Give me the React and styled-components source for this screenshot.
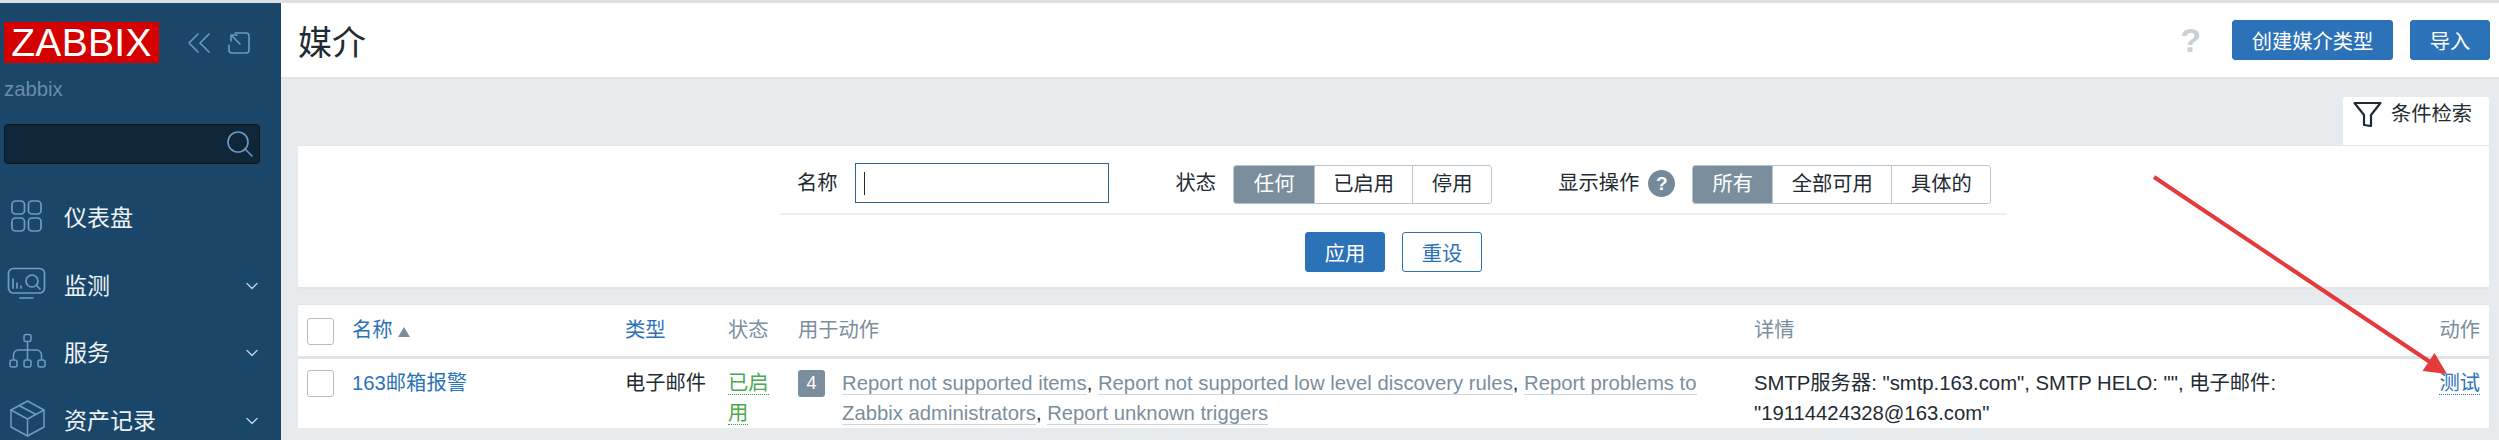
import React from "react";
import styled, { createGlobalStyle } from "styled-components";

const FONT = `"Liberation Sans", "Noto Sans CJK SC", Arial, sans-serif`;

const Global = createGlobalStyle`
  html, body { margin: 0; padding: 0; background: #e8ebee; }
  body { font-family: ${FONT}; font-size: 20.3px; color: #1f2c33; overflow: hidden; }
`;

const Page = styled.div`
  position: relative;
  width: 2499px;
  height: 440px;
  overflow: hidden;
  border-top: 3px solid #dcdfe3;
  box-sizing: border-box;
  display: flex;
`;

const Sidebar = styled.aside`
  width: 281px;
  flex: none;
  background: #1a4669;
  padding: 19px 21px 0 4px;
  box-sizing: border-box;
`;

const BrandRow = styled.div`
  display: flex;
  align-items: center;
  height: 41px;
`;

const Logo = styled.div`
  width: 155px;
  height: 41px;
  background: #d40000;
  color: #fff;
  font-size: 39px;
  line-height: 41px;
  text-align: center;
  letter-spacing: 0.3px;
`;

const BrandIcons = styled.div`
  display: flex;
  gap: 17px;
  margin-left: 28px;
  color: #6a9bc4;
`;

const Tenant = styled.div`
  margin-top: 13px;
  height: 26px;
  line-height: 26px;
  font-size: 20.3px;
  color: #698cab;
`;

const SearchBox = styled.div`
  margin-top: 22px;
  height: 40px;
  box-sizing: border-box;
  background: #0f2538;
  border: 1px solid #0a1824;
  border-radius: 4px;
  display: flex;
  align-items: center;
  justify-content: flex-end;
  padding-right: 6px;
  color: #6a9bc4;
`;

const Menu = styled.nav`
  margin-top: 18px;
  margin-left: -4px;
  margin-right: -10px;
`;

const MenuItem = styled.div`
  height: 67.7px;
  display: flex;
  align-items: center;
  color: #eef2f5;
  font-size: 23px;
`;

const MenuIcon = styled.span`
  width: 64px;
  flex: none;
  display: flex;
  color: #6f9cc2;
`;

const MenuLabel = styled.span`
  flex: 1;
`;

const Chevron = styled.span`
  display: flex;
  color: #c3d4e2;
  margin-top: 4px;
  margin-right: 12px;
`;

const Main = styled.main`
  flex: 1;
  min-width: 0;
`;

const Header = styled.header`
  height: 76px;
  box-sizing: border-box;
  background: #fff;
  border-bottom: 2px solid #dfe4e7;
  display: flex;
  align-items: center;
  padding: 0 9px 0 17px;
  gap: 17px;
`;

const Title = styled.h1`
  flex: 1;
  margin: 0;
  font-size: 34px;
  font-weight: 400;
  color: #1f2c33;
`;

const HelpMark = styled.span`
  font-size: 34px;
  font-weight: 700;
  color: #c8d1d8;
  margin-right: 14px;
`;

const Button = styled.button`
  height: 40px;
  min-width: ${(p) => p.$w || 80}px;
  box-sizing: border-box;
  padding: 0;
  font-family: ${FONT};
  font-size: 20.3px;
  color: ${(p) => (p.$ghost ? "#2b72b8" : "#fff")};
  background: ${(p) => (p.$ghost ? "#fff" : "#2b72b8")};
  border: 1px solid #2b72b8;
  border-radius: 3px;
`;

const Content = styled.div`
  padding: 18px 10px 0 17px;
`;

const TabRow = styled.div`
  display: flex;
  justify-content: flex-end;
`;

const FilterTab = styled.div`
  width: 146px;
  height: 48px;
  box-sizing: border-box;
  background: #fff;
  border-radius: 3px 3px 0 0;
  display: flex;
  align-items: flex-start;
  padding: 4px 0 0 10px;
  gap: 9px;
  line-height: 26px;
  color: #1f2c33;
`;

const FilterPanel = styled.section`
  background: #fff;
  height: 144px;
  box-sizing: border-box;
  border-top: 1px solid #e2e6e9;
  border-bottom: 2px solid #e2e6e9;
  padding-top: 17px;
  display: flex;
  flex-direction: column;
  align-items: center;
`;

const FilterFields = styled.div`
  width: 1227px;
  height: 52px;
  box-sizing: border-box;
  border-bottom: 2px solid #eceef0;
  display: flex;
  align-items: flex-start;
  padding-left: 17px;
`;

const FieldLabel = styled.label`
  line-height: 40px;
  margin-right: ${(p) => p.$gap}px;
  margin-left: ${(p) => p.$left || 0}px;
`;

const TextBox = styled.div`
  width: 254px;
  height: 40px;
  flex: none;
  box-sizing: border-box;
  border: 1px solid #2b6496;
  display: flex;
  align-items: center;
  padding-left: 8px;
`;

const Caret = styled.span`
  width: 1.5px;
  height: 23px;
  background: #1f2c33;
`;

const Segments = styled.div`
  display: flex;
  flex: none;
  height: 39px;
  margin-top: 2px;
  box-sizing: border-box;
  border: 1px solid #b9c4cc;
  border-radius: 3px;
  overflow: hidden;
`;

const Segment = styled.span`
  width: ${(p) => p.$w}px;
  box-sizing: border-box;
  text-align: center;
  line-height: 37px;
  background: ${(p) => (p.$on ? "#7b8e9e" : "#fff")};
  color: ${(p) => (p.$on ? "#fff" : "#1f2c33")};
  border-left: ${(p) => (p.$first ? "none" : "1px solid #b9c4cc")};
`;

const HelpDot = styled.span`
  flex: none;
  width: 27px;
  height: 27px;
  border-radius: 50%;
  background: #76899a;
  color: #fff;
  font-size: 19px;
  font-weight: 700;
  text-align: center;
  line-height: 27px;
  margin: 7px 17px 0 9px;
`;

const FilterActions = styled.div`
  display: flex;
  gap: 17px;
  margin-top: 17px;
`;

const TableCard = styled.section`
  margin-top: 15px;
  background: #fff;
  border-top: 1px solid #e2e6e9;
`;

const Table = styled.table`
  width: 100%;
  table-layout: fixed;
  border-collapse: collapse;
  line-height: 30px;

  th {
    height: 52px;
    box-sizing: border-box;
    padding: 0 10px 0 0;
    border-bottom: 3px solid #dee4e8;
    text-align: left;
    font-weight: 400;
    color: #7b8e9e;
  }

  td {
    padding: 9px 10px 0 0;
    vertical-align: top;
  }

  th:last-child, td:last-child {
    text-align: right;
    padding-right: 9px;
  }
`;

const Check = styled.span`
  display: block;
  width: 27px;
  height: 27px;
  box-sizing: border-box;
  margin: ${(p) => (p.$head ? 3 : 2)}px 0 0 9px;
  border: 1px solid #b1bec8;
  border-radius: 3px;
  background: #fff;
`;

const HeadLink = styled.span`
  color: #2b72b8;
`;

const SortUp = styled.span`
  display: inline-block;
  margin-left: 5px;
  border-left: 6px solid transparent;
  border-right: 6px solid transparent;
  border-bottom: 10px solid #7b8e9e;
`;

const Enabled = styled.span`
  color: #4aa84f;
  border-bottom: 1px dotted #3f9a44;
`;

const ActionCell = styled.div`
  display: flex;
  align-items: flex-start;
  gap: 17px;
`;

const Badge = styled.span`
  flex: none;
  width: 27px;
  height: 27px;
  margin-top: 2px;
  border-radius: 3px;
  background: #7b8e9e;
  color: #fff;
  font-size: 18px;
  line-height: 27px;
  text-align: center;
`;

const GreyLink = styled.span`
  color: #7b8e9e;
  border-bottom: 1px solid #cfd6db;
`;

const TestLink = styled.span`
  color: #2b72b8;
  border-bottom: 1px dotted #2b72b8;
`;

const ArrowLayer = styled.svg`
  position: absolute;
  left: 0;
  top: -3px;
  pointer-events: none;
`;

const Icon = ({ w, h, vb, sw = 1.6, children }) => (
  <svg width={w} height={h} viewBox={vb} fill="none" stroke="currentColor" strokeWidth={sw} strokeLinecap="round" strokeLinejoin="round">
    {children}
  </svg>
);

// menu icons share one 50x40 box so they line up with the labels
const menu = [
  {
    label: "仪表盘",
    icon: (
      <Icon w={50} h={40} vb="0 0 50 40" sw={1.7}>
        <rect x="12" y="5" width="12.5" height="13" rx="3.5" />
        <rect x="28.5" y="5" width="12.5" height="13" rx="3.5" />
        <rect x="12" y="22" width="12.5" height="13" rx="3.5" />
        <rect x="28.5" y="22" width="12.5" height="13" rx="3.5" />
      </Icon>
    ),
  },
  {
    label: "监测",
    arrow: true,
    icon: (
      <Icon w={50} h={40} vb="0 0 50 40" sw={1.7}>
        <rect x="8.5" y="4.5" width="36" height="24.5" rx="5" />
        <path d="M20 34h13M13 24v-9M17 24v-5M21 24v-2" />
        <circle cx="32" cy="17" r="6" />
        <path d="M36.5 21.5l3.5 3.5" />
      </Icon>
    ),
  },
  {
    label: "服务",
    arrow: true,
    icon: (
      <Icon w={50} h={40} vb="0 0 50 40" sw={1.5}>
        <rect x="24" y="3.5" width="7" height="7" rx="2" />
        <path d="M27.5 10.5v8M13.5 28v-4a5 5 0 0 1 5-5h18a5 5 0 0 1 5 5v4M27.5 18.5V28" />
        <rect x="10" y="29" width="7" height="7" rx="2" />
        <rect x="24" y="29" width="7" height="7" rx="2" />
        <rect x="38" y="29" width="7" height="7" rx="2" />
      </Icon>
    ),
  },
  {
    label: "资产记录",
    arrow: true,
    icon: (
      <Icon w={50} h={40} vb="0 0 50 40" sw={1.5}>
        <path d="M27.5 2L44 11v17l-16.5 9L11 28V11z" />
        <path d="M11 11l16.5 9L44 11M27.5 20v17M19 6.5l17 9" />
      </Icon>
    ),
  },
];

export default function App() {
  return (
    <Page>
      <Global />
      <Sidebar>
        <BrandRow>
          <Logo>ZABBIX</Logo>
          <BrandIcons>
            <Icon w={24} h={22} vb="0 0 24 22">
              <path d="M11 2L2 11l9 9M22 2l-9 9 9 9" />
            </Icon>
            <Icon w={22} h={22} vb="0 0 22 22">
              <path d="M7 1h11a3 3 0 0 1 3 3v14a3 3 0 0 1-3 3H4a3 3 0 0 1-3-3V13M3 3l9 9M3 3v6M3 3h6" />
            </Icon>
          </BrandIcons>
        </BrandRow>
        <Tenant>zabbix</Tenant>
        <SearchBox>
          <Icon w={26} h={26} vb="0 0 26 26">
            <circle cx="11" cy="11" r="10" />
            <path d="M18 18l7 7" />
          </Icon>
        </SearchBox>
        <Menu>
          {menu.map((m) => (
            <MenuItem key={m.label}>
              <MenuIcon>{m.icon}</MenuIcon>
              <MenuLabel>{m.label}</MenuLabel>
              {m.arrow && (
                <Chevron>
                  <Icon w={12} h={8} vb="0 0 12 8" sw={1.3}>
                    <path d="M1 1.5l5 5 5-5" />
                  </Icon>
                </Chevron>
              )}
            </MenuItem>
          ))}
        </Menu>
      </Sidebar>
      <Main>
        <Header>
          <Title>媒介</Title>
          <HelpMark>?</HelpMark>
          <Button $w={161}>创建媒介类型</Button>
          <Button $w={80}>导入</Button>
        </Header>
        <Content>
          <TabRow>
            <FilterTab>
              <Icon w={29} h={27} vb="0 0 29 27" sw={2.2}>
                <path d="M1.5 2h26L18 14v11l-7-1V14z" />
              </Icon>
              条件检索
            </FilterTab>
          </TabRow>
          <FilterPanel>
            <FilterFields>
              <FieldLabel $gap={17}>名称</FieldLabel>
              <TextBox><Caret /></TextBox>
              <FieldLabel $gap={17} $left={67}>状态</FieldLabel>
              <Segments>
                <Segment $on $first $w={80}>任何</Segment>
                <Segment $w={98}>已启用</Segment>
                <Segment $w={79}>停用</Segment>
              </Segments>
              <FieldLabel $gap={0} $left={66}>显示操作</FieldLabel>
              <HelpDot>?</HelpDot>
              <Segments>
                <Segment $on $first $w={79}>所有</Segment>
                <Segment $w={119}>全部可用</Segment>
                <Segment $w={99}>具体的</Segment>
              </Segments>
            </FilterFields>
            <FilterActions>
              <Button>应用</Button>
              <Button $ghost>重设</Button>
            </FilterActions>
          </FilterPanel>
          <TableCard>
            <Table>
              <colgroup>
                <col style={{ width: 54 }} />
                <col style={{ width: 273 }} />
                <col style={{ width: 103 }} />
                <col style={{ width: 70 }} />
                <col style={{ width: 956 }} />
                <col />
                <col style={{ width: 70 }} />
              </colgroup>
              <thead>
                <tr>
                  <th><Check $head /></th>
                  <th><HeadLink>名称</HeadLink><SortUp /></th>
                  <th><HeadLink>类型</HeadLink></th>
                  <th>状态</th>
                  <th>用于动作</th>
                  <th>详情</th>
                  <th>动作</th>
                </tr>
              </thead>
              <tbody>
                <tr>
                  <td><Check /></td>
                  <td><HeadLink>163邮箱报警</HeadLink></td>
                  <td>电子邮件</td>
                  <td><Enabled>已启用</Enabled></td>
                  <td>
                    <ActionCell>
                      <Badge>4</Badge>
                      <div>
                        <GreyLink>Report not supported items</GreyLink>, <GreyLink>Report not supported low level discovery rules</GreyLink>, <GreyLink>Report problems to Zabbix administrators</GreyLink>, <GreyLink>Report unknown triggers</GreyLink>
                      </div>
                    </ActionCell>
                  </td>
                  <td>SMTP服务器: "smtp.163.com", SMTP HELO: "", 电子邮件: "19114424328@163.com"</td>
                  <td><TestLink>测试</TestLink></td>
                </tr>
              </tbody>
            </Table>
          </TableCard>
        </Content>
      </Main>
      <ArrowLayer width="2499" height="440" viewBox="0 0 2499 440">
        <path d="M2154 177L2430 362" stroke="#e33b3b" strokeWidth="4" fill="none" />
        <path d="M2447 374L2434.5 353L2422.5 371z" fill="#e33b3b" />
      </ArrowLayer>
    </Page>
  );
}
